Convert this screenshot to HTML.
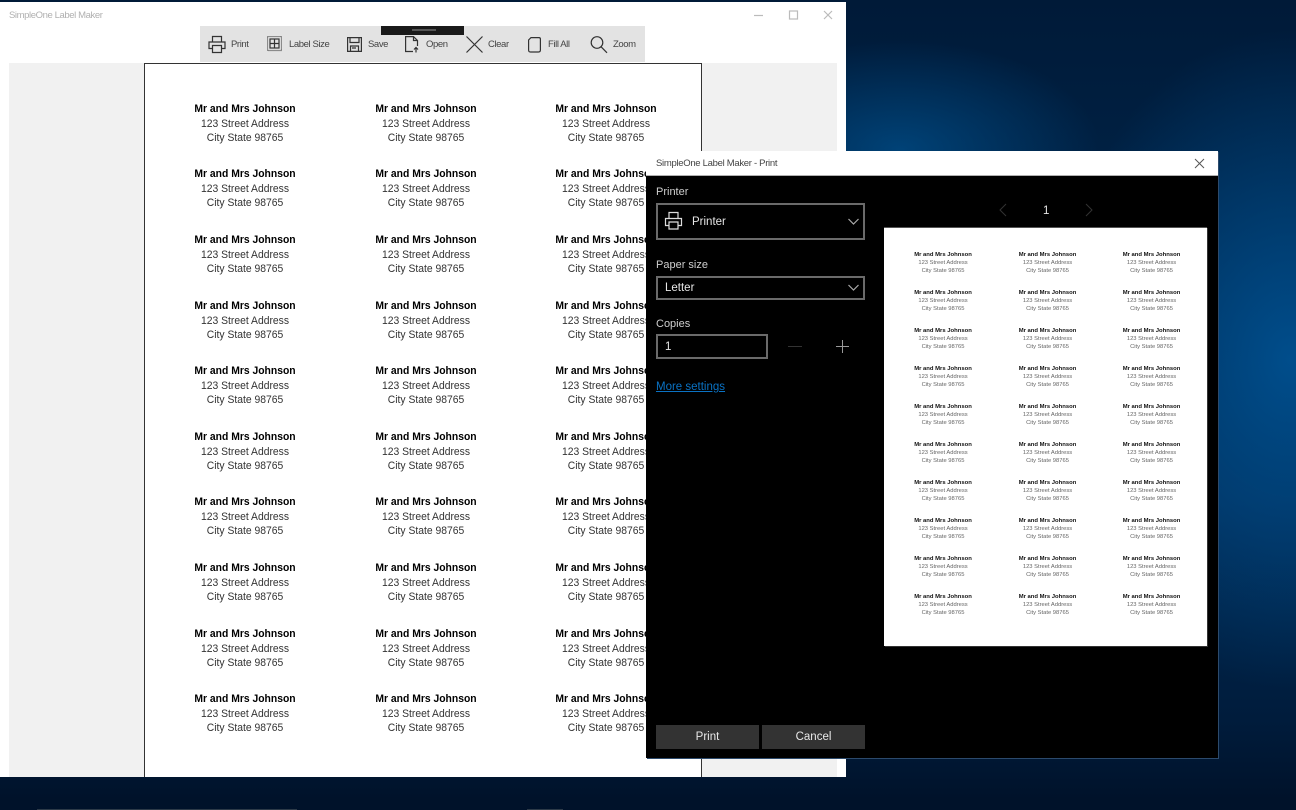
<!DOCTYPE html>
<html><head><meta charset="utf-8"><title>SimpleOne Label Maker</title>
<style>
html,body{margin:0;padding:0;width:1296px;height:810px;overflow:hidden;background:#001a38;font-family:"Liberation Sans",sans-serif}
div,svg{position:absolute}
#bg{left:0;top:0;width:1296px;height:810px;background:
radial-gradient(ellipse 240px 330px at 1290px 360px,rgba(0,84,150,.85),rgba(0,70,125,0) 100%),
radial-gradient(ellipse 200px 110px at 900px 150px,rgba(0,72,128,.85),rgba(0,60,110,0) 100%),
linear-gradient(180deg,#001a38 0,#00264c 300px,#012b55 500px,#001c3c 720px,#00122a 800px)}
#win{left:0;top:2px;width:846px;height:775px;background:#fff;overflow:hidden}
.t{font-size:9.5px;color:#b0b0b0;left:9px;top:8px;white-space:nowrap;letter-spacing:-.4px}
#side{left:9px;top:61px;width:828px;height:714px;background:#f1f1f1}
#bar{left:200px;top:26px;width:445px;height:36px;background:#e3e3e3}
#grip{left:381px;top:26px;width:83px;height:9px;background:#1a1a1a}
#grip2{left:412px;top:29px;width:24px;height:2px;background:#555}
#page{left:144px;top:61px;width:556px;height:714px;background:#fff;border:1px solid #333;border-bottom:none}
.lb{font-size:9.5px;color:#444;white-space:nowrap;top:39px;line-height:12px;letter-spacing:-.4px}
svg.i{fill:none;stroke:#333;stroke-width:1.2}
.a{width:180px;text-align:center;font-size:11.2px;line-height:14px;color:#333;white-space:nowrap;margin-top:1px;transform:scaleX(.925)}
.a b{display:block;color:#000;font-size:11.2px;position:relative;top:-1px}
.a span{display:block}
#dlg{left:646px;top:151px;width:572px;height:607px;background:#000;box-shadow:1px 1px 0 #2c4a6c;overflow:hidden}
#dt{left:0;top:0;width:572px;height:25px;background:#fff;border-bottom:1px solid #b0b0b0;box-sizing:border-box}
.dtt{left:10px;top:6px;font-size:9.5px;color:#444;white-space:nowrap;letter-spacing:-.3px;margin-top:1px}
.l{left:10px;font-size:11px;color:#cfcfcf;white-space:nowrap;margin-top:1px}
.box{box-sizing:border-box;border:2px solid #6a6a6a;left:10px;background:#000}
.w{color:#e6e6e6;font-size:11.5px;white-space:nowrap;margin-top:1px}
.btn{top:574px;height:24px;width:103px;background:#333;color:#e8e8e8;text-align:center;font-size:11.5px;line-height:24px}
#pv{left:238px;top:76px;width:323px;height:418px;background:#fff;border-top:1px solid #555;box-shadow:1px 1px 0 #333}
.p{width:100px;text-align:center;font-size:5.8px;line-height:8px;color:#666;white-space:nowrap;margin-top:2px}
.p b{display:block;color:#111;font-size:5.9px}
.p span{display:block}
.tb{top:809px;height:1px;background:#2c3a48}
</style></head><body>
<div id="bg"></div>
<div class="tb" style="left:37px;width:260px"></div>
<div class="tb" style="left:527px;width:36px"></div>
<div id="win">
<div class="t">SimpleOne Label Maker</div>
<svg style="left:750px;top:4px" width="90" height="18" class="i"><path d="M4 9.5H13" stroke="#bbb"/><rect x="39.5" y="5" width="8" height="8" stroke="#bbb"/><path d="M74 5L82 13M82 5L74 13" stroke="#bbb"/></svg>
<div id="side"></div>
<div id="page"></div>
</div>
<div style="left:0;top:0;width:846px;height:777px;overflow:hidden">
<div id="bar"></div>
<div id="grip"></div><div id="grip2"></div>

<svg class="i" style="left:208px;top:35px" width="18" height="19"><path d="M4.5 7V1.5H13.5V7M4.5 13.5H1V7H17V13.5H13.5M4.5 10.5H13.5V17.5H4.5Z"/></svg>
<div class="lb" style="left:231px">Print</div>

<svg class="i" style="left:267px;top:36px" width="15" height="16"><rect x=".5" y=".5" width="14" height="14" stroke-dasharray="1 1"/><rect x="3" y="3" width="9" height="9"/><path d="M7.500 3V12M3 7.500H12"/></svg>
<div class="lb" style="left:289px">Label Size</div>

<svg class="i" style="left:347px;top:37px" width="15" height="15"><path d="M.6.6H14.400V14.400H.6ZM3 .6V5.500H12V.6M3.500 14.400V9H11.500V14.400M5 11H9"/></svg>
<div class="lb" style="left:368px">Save</div>

<svg class="i" style="left:405px;top:36px" width="16" height="17"><path d="M8 15.500H.6V.6H8.500L12.500 4.500V10M8.500.6V4.500H12.500M11 16.500V11.500M9 13.500L11 11.500L13 13.500"/></svg>
<div class="lb" style="left:426px">Open</div>

<svg class="i" style="left:466px;top:36px" width="17" height="17"><path d="M.5.5L16.500 16.500M16.500.5L.5 16.500"/></svg>
<div class="lb" style="left:488px">Clear</div>

<svg class="i" style="left:528px;top:37px" width="13" height="16"><path d="M3 .6H11Q12.400.6 12.400 2V13Q12.400 15 10.500 15H2.500Q.6 15 .6 13V3Z"/></svg>
<div class="lb" style="left:548px">Fill All</div>

<svg class="i" style="left:590px;top:36px" width="18" height="18"><circle cx="7" cy="6.500" r="5.800"/><path d="M11 10.700L17 16.800"/></svg>
<div class="lb" style="left:613px">Zoom</div>

<div class="a" style="left:154.500px;top:102px"><b>Mr and Mrs Johnson</b><span>123 Street Address</span><span>City State 98765</span></div>
<div class="a" style="left:335.500px;top:102px"><b>Mr and Mrs Johnson</b><span>123 Street Address</span><span>City State 98765</span></div>
<div class="a" style="left:516px;top:102px"><b>Mr and Mrs Johnson</b><span>123 Street Address</span><span>City State 98765</span></div>
<div class="a" style="left:154.500px;top:167px"><b>Mr and Mrs Johnson</b><span>123 Street Address</span><span>City State 98765</span></div>
<div class="a" style="left:335.500px;top:167px"><b>Mr and Mrs Johnson</b><span>123 Street Address</span><span>City State 98765</span></div>
<div class="a" style="left:516px;top:167px"><b>Mr and Mrs Johnson</b><span>123 Street Address</span><span>City State 98765</span></div>
<div class="a" style="left:154.500px;top:233px"><b>Mr and Mrs Johnson</b><span>123 Street Address</span><span>City State 98765</span></div>
<div class="a" style="left:335.500px;top:233px"><b>Mr and Mrs Johnson</b><span>123 Street Address</span><span>City State 98765</span></div>
<div class="a" style="left:516px;top:233px"><b>Mr and Mrs Johnson</b><span>123 Street Address</span><span>City State 98765</span></div>
<div class="a" style="left:154.500px;top:299px"><b>Mr and Mrs Johnson</b><span>123 Street Address</span><span>City State 98765</span></div>
<div class="a" style="left:335.500px;top:299px"><b>Mr and Mrs Johnson</b><span>123 Street Address</span><span>City State 98765</span></div>
<div class="a" style="left:516px;top:299px"><b>Mr and Mrs Johnson</b><span>123 Street Address</span><span>City State 98765</span></div>
<div class="a" style="left:154.500px;top:364px"><b>Mr and Mrs Johnson</b><span>123 Street Address</span><span>City State 98765</span></div>
<div class="a" style="left:335.500px;top:364px"><b>Mr and Mrs Johnson</b><span>123 Street Address</span><span>City State 98765</span></div>
<div class="a" style="left:516px;top:364px"><b>Mr and Mrs Johnson</b><span>123 Street Address</span><span>City State 98765</span></div>
<div class="a" style="left:154.500px;top:430px"><b>Mr and Mrs Johnson</b><span>123 Street Address</span><span>City State 98765</span></div>
<div class="a" style="left:335.500px;top:430px"><b>Mr and Mrs Johnson</b><span>123 Street Address</span><span>City State 98765</span></div>
<div class="a" style="left:516px;top:430px"><b>Mr and Mrs Johnson</b><span>123 Street Address</span><span>City State 98765</span></div>
<div class="a" style="left:154.500px;top:495px"><b>Mr and Mrs Johnson</b><span>123 Street Address</span><span>City State 98765</span></div>
<div class="a" style="left:335.500px;top:495px"><b>Mr and Mrs Johnson</b><span>123 Street Address</span><span>City State 98765</span></div>
<div class="a" style="left:516px;top:495px"><b>Mr and Mrs Johnson</b><span>123 Street Address</span><span>City State 98765</span></div>
<div class="a" style="left:154.500px;top:561px"><b>Mr and Mrs Johnson</b><span>123 Street Address</span><span>City State 98765</span></div>
<div class="a" style="left:335.500px;top:561px"><b>Mr and Mrs Johnson</b><span>123 Street Address</span><span>City State 98765</span></div>
<div class="a" style="left:516px;top:561px"><b>Mr and Mrs Johnson</b><span>123 Street Address</span><span>City State 98765</span></div>
<div class="a" style="left:154.500px;top:627px"><b>Mr and Mrs Johnson</b><span>123 Street Address</span><span>City State 98765</span></div>
<div class="a" style="left:335.500px;top:627px"><b>Mr and Mrs Johnson</b><span>123 Street Address</span><span>City State 98765</span></div>
<div class="a" style="left:516px;top:627px"><b>Mr and Mrs Johnson</b><span>123 Street Address</span><span>City State 98765</span></div>
<div class="a" style="left:154.500px;top:692px"><b>Mr and Mrs Johnson</b><span>123 Street Address</span><span>City State 98765</span></div>
<div class="a" style="left:335.500px;top:692px"><b>Mr and Mrs Johnson</b><span>123 Street Address</span><span>City State 98765</span></div>
<div class="a" style="left:516px;top:692px"><b>Mr and Mrs Johnson</b><span>123 Street Address</span><span>City State 98765</span></div>
</div>

<div id="dlg">
<div id="dt"><div class="dtt">SimpleOne Label Maker - Print</div>
<svg style="left:548px;top:7px" width="11" height="11"><path d="M1 1L10 10M10 1L1 10" stroke="#555" stroke-width="1" fill="none"/></svg></div>
<div class="l" style="top:34px">Printer</div>
<div class="box" style="top:52px;width:209px;height:37px"></div>
<svg class="i" style="left:18px;top:60px;stroke:#ddd" width="20" height="20"><path d="M5 7.500V1.500H14V7.500M5 14.500H1.500V7.500H17.500V14.500H14M5 11H14V18H5Z"/></svg>
<div class="w" style="left:46px;top:64px">Printer</div>
<svg class="i" style="left:202px;top:67px;stroke:#aaa" width="11" height="7"><path d="M.5 1L5.500 6L10.500 1"/></svg>
<div class="l" style="top:107px">Paper size</div>
<div class="box" style="top:125px;width:209px;height:24px"></div>
<div class="w" style="left:19px;top:130px">Letter</div>
<svg class="i" style="left:202px;top:133px;stroke:#aaa" width="11" height="7"><path d="M.5 1L5.500 6L10.500 1"/></svg>
<div class="l" style="top:166px">Copies</div>
<div class="box" style="top:183px;width:112px;height:25px"></div>
<div class="w" style="left:19px;top:189px">1</div>
<svg style="left:142px;top:190px" width="14" height="12"><path d="M0 5.500H14" stroke="#333" stroke-width="1"/></svg>
<svg style="left:190px;top:189px" width="13" height="13"><path d="M0 6.500H13M6.500 0V13" stroke="#999" stroke-width="1"/></svg>
<div style="left:10px;top:230px;font-size:11.500px;color:#0a72c4;text-decoration:underline;white-space:nowrap">More settings</div>
<svg style="left:353px;top:52px" width="8" height="14"><path d="M7 1L1 7L7 13" stroke="#333" stroke-width="1" fill="none"/></svg>
<div class="w" style="left:397px;top:53px">1</div>
<svg style="left:439px;top:52px" width="8" height="14"><path d="M1 1L7 7L1 13" stroke="#333" stroke-width="1" fill="none"/></svg>
<div id="pv"></div>
<div class="btn" style="left:10px">Print</div>
<div class="btn" style="left:116px">Cancel</div>

<div class="p" style="left:247px;top:98px"><b>Mr and Mrs Johnson</b><span>123 Street Address</span><span>City State 98765</span></div>
<div class="p" style="left:351.500px;top:98px"><b>Mr and Mrs Johnson</b><span>123 Street Address</span><span>City State 98765</span></div>
<div class="p" style="left:455.500px;top:98px"><b>Mr and Mrs Johnson</b><span>123 Street Address</span><span>City State 98765</span></div>
<div class="p" style="left:247px;top:136px"><b>Mr and Mrs Johnson</b><span>123 Street Address</span><span>City State 98765</span></div>
<div class="p" style="left:351.500px;top:136px"><b>Mr and Mrs Johnson</b><span>123 Street Address</span><span>City State 98765</span></div>
<div class="p" style="left:455.500px;top:136px"><b>Mr and Mrs Johnson</b><span>123 Street Address</span><span>City State 98765</span></div>
<div class="p" style="left:247px;top:174px"><b>Mr and Mrs Johnson</b><span>123 Street Address</span><span>City State 98765</span></div>
<div class="p" style="left:351.500px;top:174px"><b>Mr and Mrs Johnson</b><span>123 Street Address</span><span>City State 98765</span></div>
<div class="p" style="left:455.500px;top:174px"><b>Mr and Mrs Johnson</b><span>123 Street Address</span><span>City State 98765</span></div>
<div class="p" style="left:247px;top:212px"><b>Mr and Mrs Johnson</b><span>123 Street Address</span><span>City State 98765</span></div>
<div class="p" style="left:351.500px;top:212px"><b>Mr and Mrs Johnson</b><span>123 Street Address</span><span>City State 98765</span></div>
<div class="p" style="left:455.500px;top:212px"><b>Mr and Mrs Johnson</b><span>123 Street Address</span><span>City State 98765</span></div>
<div class="p" style="left:247px;top:250px"><b>Mr and Mrs Johnson</b><span>123 Street Address</span><span>City State 98765</span></div>
<div class="p" style="left:351.500px;top:250px"><b>Mr and Mrs Johnson</b><span>123 Street Address</span><span>City State 98765</span></div>
<div class="p" style="left:455.500px;top:250px"><b>Mr and Mrs Johnson</b><span>123 Street Address</span><span>City State 98765</span></div>
<div class="p" style="left:247px;top:288px"><b>Mr and Mrs Johnson</b><span>123 Street Address</span><span>City State 98765</span></div>
<div class="p" style="left:351.500px;top:288px"><b>Mr and Mrs Johnson</b><span>123 Street Address</span><span>City State 98765</span></div>
<div class="p" style="left:455.500px;top:288px"><b>Mr and Mrs Johnson</b><span>123 Street Address</span><span>City State 98765</span></div>
<div class="p" style="left:247px;top:326px"><b>Mr and Mrs Johnson</b><span>123 Street Address</span><span>City State 98765</span></div>
<div class="p" style="left:351.500px;top:326px"><b>Mr and Mrs Johnson</b><span>123 Street Address</span><span>City State 98765</span></div>
<div class="p" style="left:455.500px;top:326px"><b>Mr and Mrs Johnson</b><span>123 Street Address</span><span>City State 98765</span></div>
<div class="p" style="left:247px;top:364px"><b>Mr and Mrs Johnson</b><span>123 Street Address</span><span>City State 98765</span></div>
<div class="p" style="left:351.500px;top:364px"><b>Mr and Mrs Johnson</b><span>123 Street Address</span><span>City State 98765</span></div>
<div class="p" style="left:455.500px;top:364px"><b>Mr and Mrs Johnson</b><span>123 Street Address</span><span>City State 98765</span></div>
<div class="p" style="left:247px;top:402px"><b>Mr and Mrs Johnson</b><span>123 Street Address</span><span>City State 98765</span></div>
<div class="p" style="left:351.500px;top:402px"><b>Mr and Mrs Johnson</b><span>123 Street Address</span><span>City State 98765</span></div>
<div class="p" style="left:455.500px;top:402px"><b>Mr and Mrs Johnson</b><span>123 Street Address</span><span>City State 98765</span></div>
<div class="p" style="left:247px;top:440px"><b>Mr and Mrs Johnson</b><span>123 Street Address</span><span>City State 98765</span></div>
<div class="p" style="left:351.500px;top:440px"><b>Mr and Mrs Johnson</b><span>123 Street Address</span><span>City State 98765</span></div>
<div class="p" style="left:455.500px;top:440px"><b>Mr and Mrs Johnson</b><span>123 Street Address</span><span>City State 98765</span></div>
</div>
</body></html>
